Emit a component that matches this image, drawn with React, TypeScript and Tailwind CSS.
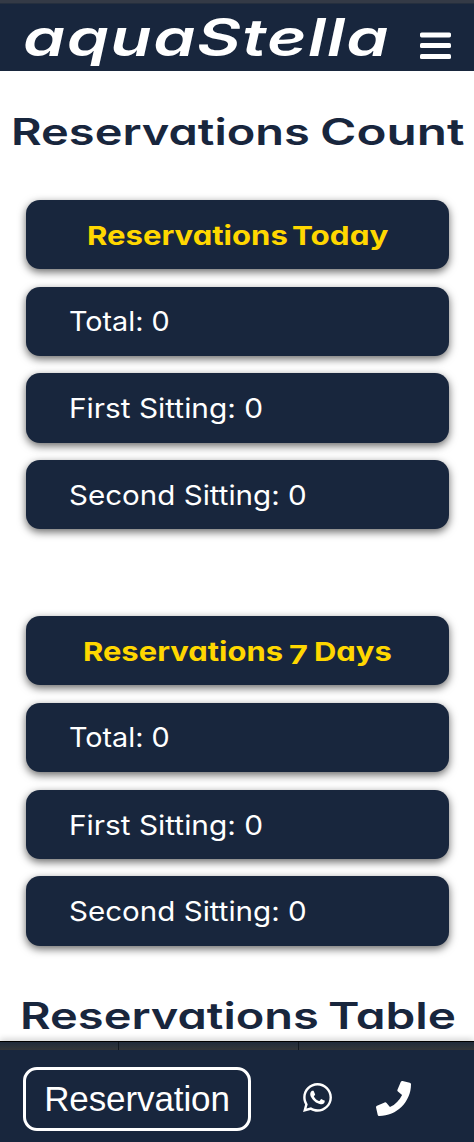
import type { ReactNode } from "react";
import { FaPhone, FaWhatsapp } from "react-icons/fa";

function Word({ children, box, stretch }: { children: ReactNode; box: string; stretch: string }) {
  return (
    <span className={`block shrink-0 whitespace-nowrap ${box}`}>
      <span className={`inline-block origin-left ${stretch}`}>{children}</span>
    </span>
  );
}

function Card({ children }: { children: ReactNode }) {
  return (
    <div className="flex h-[69.2px] items-center rounded-[14px] bg-[#18263d] text-white shadow-[0_3px_8px_rgba(0,0,0,0.6)]">
      {children}
    </div>
  );
}

function CardTitle({ children, pad }: { children: ReactNode; pad: string }) {
  return (
    <h2 className={`flex pt-[2px] text-[26px] leading-8 font-[660] text-[#ffd700] [font-feature-settings:'cv11'] ${pad}`}>
      {children}
    </h2>
  );
}

function Counts() {
  return (
    <>
      <Card>
        <p className="pt-px pl-[43px] text-[27px] leading-8">
          <Word box="w-[101px]" stretch="scale-x-[1.065]">Total: 0</Word>
        </p>
      </Card>
      <Card>
        <p className="pt-[3px] pl-[43px] text-[27px] leading-8">
          <Word box="w-[195px]" stretch="scale-x-[1.105]">First Sitting: 0</Word>
        </p>
      </Card>
      <Card>
        <p className="pt-[2px] pl-[43px] text-[27px] leading-8">
          <Word box="w-[240px]" stretch="scale-x-[1.095]">Second Sitting: 0</Word>
        </p>
      </Card>
    </>
  );
}

const heading = "flex text-[37px] leading-[44px] font-[560] text-[#18263d] [font-feature-settings:'cv11']";

export default function App() {
  return (
    <div className="flex h-[1142px] w-full flex-col overflow-hidden bg-white font-['Inter',sans-serif]">
      <header className="flex h-[71px] shrink-0 justify-between border-t-[3px] border-[#343a46] bg-[#18263d] pr-[23px] pl-[23px] text-white shadow-[inset_0_1px_0_#252f3e]">
        <div className="pt-1 text-[52px] leading-[62px] font-[640] tracking-[1.1px] italic [font-feature-settings:'cv11']">
          <Word box="w-[368px]" stretch="scale-x-[1.3]">aquaStella</Word>
        </div>
        <button aria-label="Menu" className="mt-[29px] h-7 w-8 shrink-0">
          <svg viewBox="0 0 32 28" className="h-7 w-8" fill="currentColor">
            <rect x="1" y="0.4" width="31" height="5" rx="1.6" />
            <rect x="1" y="11" width="31" height="5" rx="1.6" />
            <rect x="1" y="22" width="31" height="5" rx="1.6" />
          </svg>
        </button>
      </header>

      <main className="flex h-[970px] shrink-0 flex-col overflow-hidden">
        <h1 className={`${heading} mt-[39px] pl-[11px]`}>
          <Word box="w-[309px]" stretch="scale-x-[1.27]">Reservations</Word>
          <Word box="w-[146px]" stretch="scale-x-[1.335]">Count</Word>
        </h1>

        <section className="mt-[46px] mr-[25px] ml-[26px] flex flex-col gap-[17.5px]">
          <Card>
            <CardTitle pad="pl-[60.5px]">
              <Word box="w-[205px]" stretch="scale-x-[1.195]">Reservations</Word>
              <Word box="w-[98px]" stretch="scale-x-[1.21]">Today</Word>
            </CardTitle>
          </Card>
          <Counts />
        </section>

        <section className="mt-[87px] mr-[25px] ml-[26px] flex flex-col gap-[17.5px]">
          <Card>
            <CardTitle pad="pl-[57px]">
              <Word box="w-[206px]" stretch="scale-x-[1.19]">Reservations</Word>
              <Word box="w-[25px]" stretch="scale-x-[1.25] translate-y-[3px]">7</Word>
              <Word box="w-[80px]" stretch="scale-x-[1.19]">Days</Word>
            </CardTitle>
          </Card>
          <Counts />
        </section>

        <h1 className={`${heading} mt-[48px] pl-[19.5px]`}>
          <Word box="w-[308px]" stretch="scale-x-[1.27]">Reservations</Word>
          <Word box="w-[130px]" stretch="scale-x-[1.29]">Table</Word>
        </h1>
      </main>

      <div className="grid h-[9px] shrink-0 grid-cols-[119px_180px_1fr] border-t border-black bg-linear-to-b from-[#202b3b] to-[#333639] shadow-[0_-2px_6px_rgba(0,0,0,0.18)]">
        <div className="border-r border-[#111820]" />
        <div className="border-r border-[#111820]" />
        <div />
      </div>

      <footer className="flex h-[92px] shrink-0 items-center bg-[#18263d] pt-[5px] pb-0 pl-[23px] text-white">
        <button className="flex h-16 w-[228px] items-center justify-center rounded-[14px] border-[3px] border-white pt-[2px] font-['Liberation_Sans',sans-serif] text-[35px] tracking-[-0.1px]">
          Reservation
        </button>
        <FaWhatsapp className="mb-[3px] ml-[50px] size-[33px]" />
        <FaPhone className="mb-[1px] ml-[41.5px] size-[35px]" />
      </footer>
    </div>
  );
}
